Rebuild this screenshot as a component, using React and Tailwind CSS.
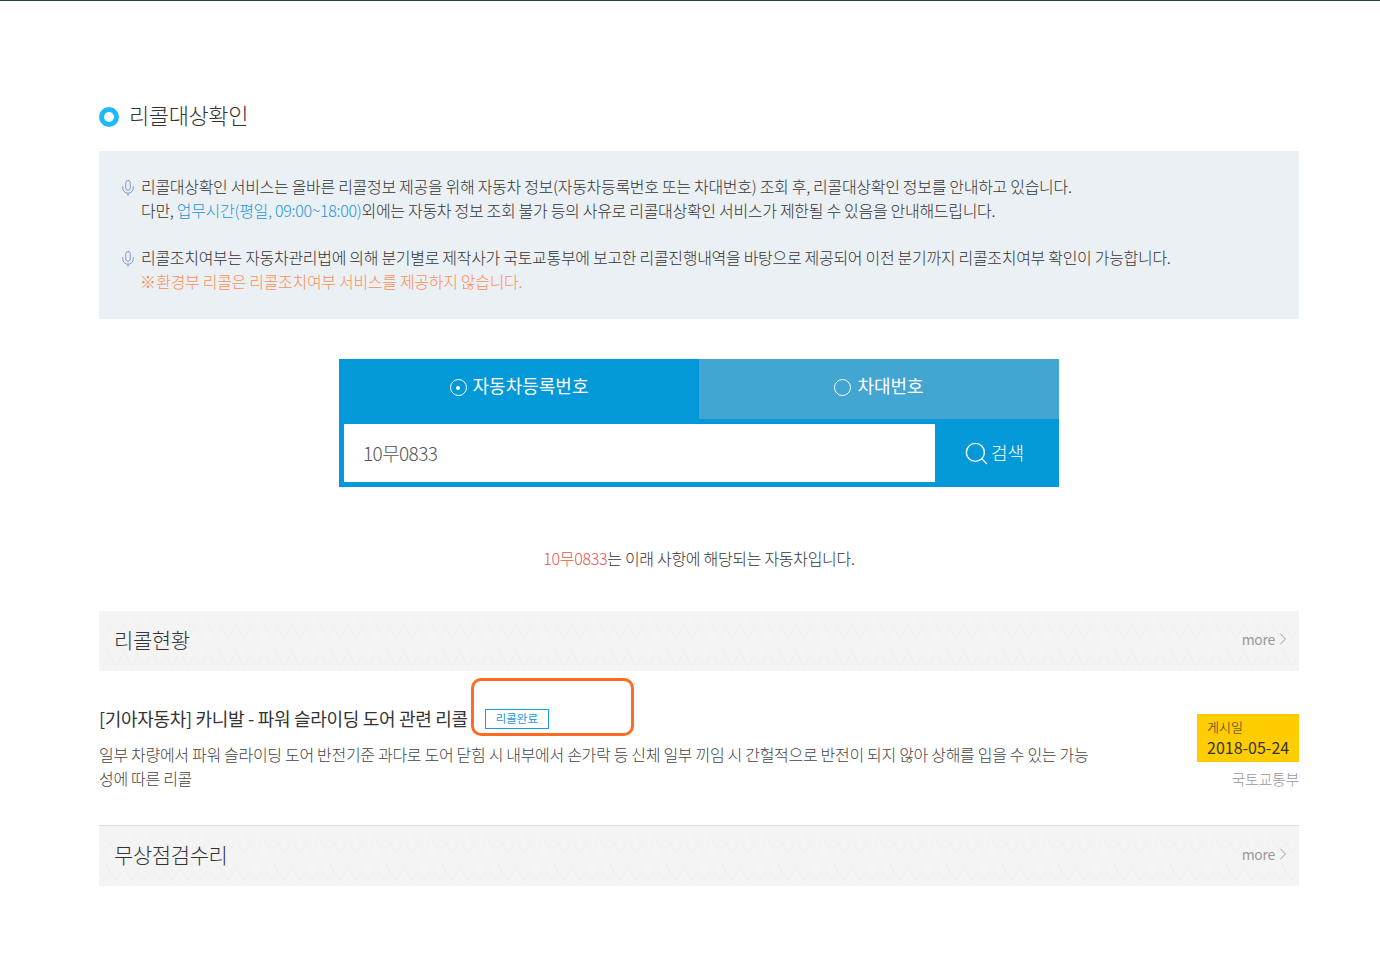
import { ChevronRight, Mic, Search } from "lucide-react";

const FONT = "font-['Noto_Sans_CJK_KR','Noto_Sans',sans-serif]";

function Radio({ checked }) {
  return (
    <span className="mt-[5px] flex h-[17px] w-[17px] items-center justify-center rounded-full border border-white">
      {checked && <span className="h-1 w-1 rounded-full bg-white" />}
    </span>
  );
}

// faint zigzag texture behind the section bars
function BarTexture({ id }) {
  return (
    <svg className="absolute inset-0 h-full w-full" aria-hidden="true">
      <defs>
        <pattern id={id} width="28" height="28" patternUnits="userSpaceOnUse">
          <path d="M-6 8L5 27L11 17M6 8L17 27L23 17M22 8L33 27L39 17" fill="none" stroke="#efefef" strokeWidth="1" />
        </pattern>
      </defs>
      <rect width="100%" height="100%" fill={`url(#${id})`} />
    </svg>
  );
}

function SectionBar({ id, title, className = "" }) {
  return (
    <div className={`relative bg-[#f4f4f4] ${className}`}>
      <BarTexture id={id} />
      <div className="relative flex h-full items-center justify-between pb-[2px] pl-[15px] pr-[6px]">
        <h3 className="text-[21px] tracking-[-0.4px] text-[#333]">{title}</h3>
        <span className="flex items-center pb-[2px] text-[14px] font-normal tracking-[-0.3px] text-[#999]">
          more
          <ChevronRight size={20} strokeWidth={1.2} className="-ml-[2px]" />
        </span>
      </div>
    </div>
  );
}

export default function App() {
  return (
    <div className={`min-h-[958px] border-t border-[#2c3e46] bg-white font-light ${FONT}`}>
      <div className="ml-[99px] w-[1200px] pt-[100px]">
        <h2 className="flex h-[30px] items-center gap-[10px] text-[22px] tracking-[-0.4px] text-[#333]">
          <span className="mt-[2px] h-5 w-5 rounded-full border-[5px] border-[#1db9fb]" />
          <span className="pb-[4px]">리콜대상확인</span>
        </h2>

        <div className="mt-[20px] h-[168px] bg-[#ebf0f4] pl-[20px] pt-[23px] text-[16px] leading-[24px] tracking-[-0.3px] text-[#333]">
          <div className="flex gap-[4px]">
            <Mic size={18} strokeWidth={1} className="mt-[5px] text-[#5f7fc0]" />
            <p>
              리콜대상확인 서비스는 올바른 리콜정보 제공을 위해 자동차 정보(자동차등록번호 또는 차대번호) 조회 후, 리콜대상확인 정보를 안내하고 있습니다.
              <br />
              다만, <span className="text-[#1a97de]">업무시간(평일, 09:00~18:00)</span>외에는 자동차 정보 조회 불가 등의 사유로 리콜대상확인 서비스가 제한될 수 있음을 안내해드립니다.
            </p>
          </div>
          <div className="mt-[23px] flex gap-[4px]">
            <Mic size={18} strokeWidth={1} className="mt-[5px] text-[#5f7fc0]" />
            <p>
              리콜조치여부는 자동차관리법에 의해 분기별로 제작사가 국토교통부에 보고한 리콜진행내역을 바탕으로 제공되어 이전 분기까지 리콜조치여부 확인이 가능합니다.
              <br />
              <span className="-ml-[1px] text-[#fb8f55]">
                ※<span className="tracking-[-3px]"> </span>환경부 리콜은 리콜조치여부 서비스를 제공하지 않습니다.
              </span>
            </p>
          </div>
        </div>

        <div className="mx-auto mt-[40px] w-[720px]">
          <div className="flex h-[60px] text-[18px] font-normal text-white">
            <div className="flex w-[360px] items-center justify-center gap-[6px] bg-[#0398d8] pb-[8px]">
              <Radio checked />
              자동차등록번호
            </div>
            <div className="flex w-[360px] items-center justify-center gap-[6px] bg-[#43a5d2] pb-[8px]">
              <Radio />
              차대번호
            </div>
          </div>
          <div className="flex h-[68px] bg-[#0398d8] p-[5px] pr-0">
            <div className="flex w-[591px] items-center bg-white pl-[19px] pt-[1px] text-[19px] tracking-[-0.6px] text-[#555]">10무0833</div>
            <div className="flex flex-1 items-center justify-center gap-[1px] pr-[7px] text-[18px] text-white">
              <Search size={27} strokeWidth={1.2} />
              <span className="pb-[2px]">검색</span>
            </div>
          </div>
        </div>

        <p className="mt-[59px] text-center text-[16px] leading-[24px] tracking-[-0.3px] text-[#333]">
          <span className="text-[#e8554e]">10무0833</span>는 이래 사항에 해당되는 자동차입니다.
        </p>

        <SectionBar id="bar-recall" title="리콜현황" className="mt-[41px] h-[60px]" />

        <div className="relative flex h-[154px] justify-between pt-[37px]">
          <div className="w-[1000px]">
            <div className="flex h-[22px] items-center gap-[17px]">
              <h4 className="pb-[2px] text-[18px] font-normal tracking-[-0.3px] text-[#333]">[기아자동차] 카니발 - 파워 슬라이딩 도어 관련 리콜</h4>
              <span className="-mt-[1px] flex h-[20px] w-[64px] items-center justify-center border border-[#1a9edb] text-[11.5px] font-normal text-[#1a97de]">리콜완료</span>
            </div>
            <p className="mt-[12px] text-[16px] leading-[24px] tracking-[-0.3px] text-[#444]">
              일부 차량에서 파워 슬라이딩 도어 반전기준 과다로 도어 닫힘 시 내부에서 손가락 등 신체 일부 끼임 시 간헐적으로 반전이 되지 않아 상해를 입을 수 있는 가능성에 따른 리콜
            </p>
          </div>
          <div className="flex w-[102px] flex-col items-end pt-[6px]">
            <div className="h-[48px] w-full whitespace-nowrap bg-[#ffcc00] px-[10px] pt-[5px] text-[#333]">
              <div className="text-[13px] leading-[16px]">게시일</div>
              <div className="text-[16px] font-normal leading-[24px]">2018-05-24</div>
            </div>
            <span className="mt-[6px] text-[15px] tracking-[-0.3px] text-[#999]">국토교통부</span>
          </div>
          <div className="absolute left-[372px] top-[7px] h-[58px] w-[163px] rounded-[10px] border-[3px] border-[#ff6a21]" />
        </div>

        <SectionBar id="bar-free" title="무상점검수리" className="h-[61px] border-t border-[#dddddd]" />
      </div>
    </div>
  );
}
